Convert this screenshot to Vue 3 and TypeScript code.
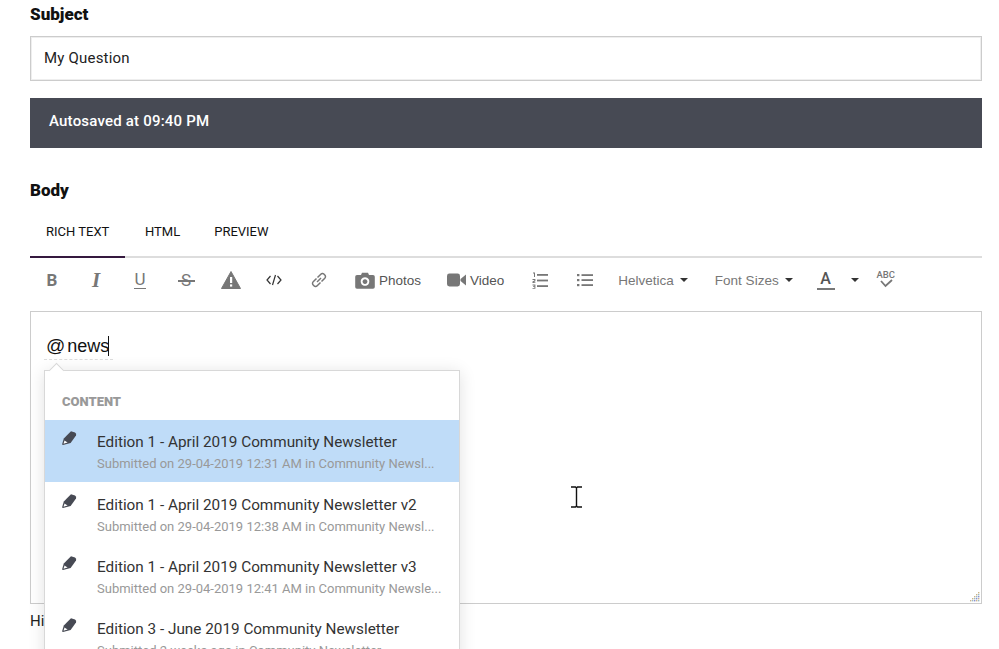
<template>
  <div class="page">
    <label class="field-label subject-label">Subject</label>
    <div class="text-input">My Question</div>
    <div class="autosave">Autosaved at 09:40 PM</div>

    <label class="field-label body-label">Body</label>
    <div class="tabs">
      <div v-for="(tab, i) in tabs" :key="tab" class="tab" :class="{ active: i === 0 }">{{ tab }}</div>
    </div>

    <div class="toolbar">
      <span class="tool t-b">B</span>
      <span class="tool t-i">I</span>
      <span class="tool t-u">U</span>
      <span class="tool t-s">S</span>
      <svg class="ico warn" width="20" height="18" viewBox="0 0 20 18">
        <path d="M10 0.5 L19.5 17.5 H0.5 Z" fill="#777" stroke="#777" stroke-linejoin="round" />
        <rect x="9" y="6" width="2.2" height="6" fill="#fff" />
        <rect x="9" y="13.4" width="2.2" height="2.2" fill="#fff" />
      </svg>
      <svg class="ico code" width="16" height="12" viewBox="0 0 16 12" fill="none" stroke="#333" stroke-width="1.2">
        <path d="M4.5 2 L1 6 L4.5 10 M11.5 2 L15 6 L11.5 10 M9.5 1 L6.5 11" />
      </svg>
      <svg class="ico link" width="16" height="16" viewBox="0 0 16 16" fill="none" stroke="#777" stroke-width="1.5">
        <path d="M6.5 5.5 L9.8 2.2 a2.3 2.3 0 0 1 3.6 0.4 a2.3 2.3 0 0 1 0.4 3.6 L10.5 9.5" />
        <path d="M9.5 10.5 L6.2 13.8 a2.3 2.3 0 0 1 -3.6 -0.4 a2.3 2.3 0 0 1 -0.4 -3.6 L5.5 6.5" />
        <path d="M6 10 L10 6" />
      </svg>
      <span class="tool-text photos">
        <svg width="20" height="17" viewBox="0 0 20 17">
          <path fill="#777" fill-rule="evenodd" d="M2 3 H6 L7 .8 H13 L14 3 H18 a1.8 1.8 0 0 1 1.8 1.8 V15 a1.8 1.8 0 0 1 -1.8 1.8 H2 A1.8 1.8 0 0 1 .2 15 V4.8 A1.8 1.8 0 0 1 2 3 Z M10 5.2 a4.3 4.3 0 1 0 .01 0 Z M10 7.2 a2.4 2.4 0 1 1 -.01 0 Z" />
        </svg>
        Photos
      </span>
      <span class="tool-text video">
        <svg width="19" height="14" viewBox="0 0 19 14">
          <rect x="0" y="0.5" width="13" height="13" rx="2.4" fill="#777" />
          <path d="M13.5 6 L19 1.5 V12.5 L13.5 8 Z" fill="#777" />
        </svg>
        Video
      </span>
      <svg class="ico ol" width="16" height="17" viewBox="0 0 16 17" fill="#777">
        <rect x="5" y="2" width="11" height="1.8" />
        <rect x="5" y="7.6" width="11" height="1.8" />
        <rect x="5" y="13.2" width="11" height="1.8" />
        <path d="M1 .5 H3 V5 H2 V1.5 H1 Z M.5 7 H3.4 V9.2 L1.6 10.2 H3.4 V11 H.5 V9.6 L2.4 8.6 V7.9 H.5 Z M.5 12.6 H3.4 V16.8 H.5 V16 H2.4 V15 H1 V14.3 H2.4 V13.4 H.5 Z" />
      </svg>
      <svg class="ico ul" width="16" height="14" viewBox="0 0 16 14" fill="#777">
        <rect x="0" y="1" width="2.4" height="2.2" />
        <rect x="0" y="6" width="2.4" height="2.2" />
        <rect x="0" y="11" width="2.4" height="2.2" />
        <rect x="4.5" y="1.2" width="11.5" height="1.8" />
        <rect x="4.5" y="6.2" width="11.5" height="1.8" />
        <rect x="4.5" y="11.2" width="11.5" height="1.8" />
      </svg>
      <span class="tool-text font-name">Helvetica<i class="caret"></i></span>
      <span class="tool-text font-size">Font Sizes<i class="caret"></i></span>
      <span class="color-a">A</span>
      <i class="caret color-caret"></i>
      <span class="spell">
        <span class="abc">ABC</span>
        <svg width="14" height="9" viewBox="0 0 14 9" fill="none" stroke="#777" stroke-width="1.8">
          <path d="M2 2 L6.5 7 L13 1" />
        </svg>
      </span>
    </div>

    <div class="editor">
      <div class="mention-line">
        <span class="at">@</span><span class="typed">news</span><i class="text-cursor"></i>
      </div>
      <svg class="resize" width="10" height="10" viewBox="0 0 10 10">
        <g v-for="d in grip" :key="d.x + '-' + d.y">
          <rect :x="d.x" :y="d.y" width="1.4" height="1.4" :fill="d.c" />
        </g>
      </svg>
      <svg class="ibeam" width="13" height="22" viewBox="0 0 13 22" fill="none" stroke="#111" stroke-width="1.4">
        <path d="M1 1 H5.5 L6.5 2 L7.5 1 H12 M6.5 2 V20 M1 21 H5.5 L6.5 20 L7.5 21 H12" />
      </svg>
    </div>

    <div class="hint">Hi</div>

    <div class="dropdown">
      <div class="arrow"></div>
      <div class="drop-title">CONTENT</div>
      <div v-for="(item, i) in items" :key="item.title" class="drop-item" :class="{ selected: i === 0 }">
        <svg class="pencil" width="15" height="15" viewBox="0 0 15 15">
          <path fill="#474a54" d="M9 .2 L13 1.6 Q14.8 2.8 14 4.6 L8.6 12 L1 13.9 Q.1 14 .2 13 L1.8 7.6 Z" />
          <path fill="#fff" d="M2.5 9.6 L5.6 11.6 L1.5 12.8 Z" />
        </svg>
        <div class="item-title">{{ item.title }}</div>
        <div class="item-sub">{{ item.sub }}</div>
      </div>
    </div>
  </div>
</template>

<script setup lang="ts">
const tabs = ['RICH TEXT', 'HTML', 'PREVIEW']

const items = [
  { title: 'Edition 1 - April 2019 Community Newsletter', sub: 'Submitted on 29-04-2019 12:31 AM in Community Newsl...' },
  { title: 'Edition 1 - April 2019 Community Newsletter v2', sub: 'Submitted on 29-04-2019 12:38 AM in Community Newsl...' },
  { title: 'Edition 1 - April 2019 Community Newsletter v3', sub: 'Submitted on 29-04-2019 12:41 AM in Community Newsle...' },
  { title: 'Edition 3 - June 2019 Community Newsletter', sub: 'Submitted 2 weeks ago in Community Newsletter' }
]

// little dotted triangle in the corner of the textarea
const gripColors = ['#8a8fd0', '#c9b48a', '#9ab8c9']
const grip: { x: number; y: number; c: string }[] = []
for (let row = 0; row < 5; row++) {
  for (let col = 4 - row; col < 5; col++) {
    grip.push({ x: col * 2, y: row * 2, c: gripColors[(row + col) % 3] })
  }
}
</script>

<style scoped>
.page {
  position: relative;
  width: 999px;
  height: 649px;
  overflow: hidden;
  padding: 0 17px 0 30px;
  box-sizing: border-box;
  background: #fff;
  font-family: Roboto, "Noto Sans", sans-serif;
  color: #111;
}

.field-label {
  display: block;
  font-size: 17px;
  line-height: 20px;
  font-weight: 900;
}

.subject-label {
  padding-top: 4px;
}

.text-input {
  margin-top: 12px;
  height: 45px;
  box-sizing: border-box;
  border: 1px solid #ccc;
  box-shadow: inset 0 0 0 1px #eee;
  padding: 0 13px 2px;
  display: flex;
  align-items: center;
  font-size: 15px;
  letter-spacing: 0.2px;
  color: #222;
}

.autosave {
  margin-top: 17px;
  height: 50px;
  box-sizing: border-box;
  background: #474a54;
  color: #fff;
  padding: 0 19px 5px;
  display: flex;
  align-items: center;
  font-size: 15px;
  font-weight: 500;
  letter-spacing: 0.2px;
}

.body-label {
  margin-top: 32px;
}

.tabs {
  margin-top: 7px;
  height: 49px;
  display: flex;
  border-bottom: 2px solid #ddd;
  box-sizing: content-box;
}

.tab {
  padding: 0 17px;
  display: flex;
  align-items: center;
  font-size: 13px;
  color: #111;
  height: 49px;
}

.tab.active {
  width: 63px;
  padding: 0 16px;
  margin-right: 3px;
  white-space: nowrap;
  border-bottom: 2px solid #35193f;
  height: 49px;
}

.toolbar {
  height: 52px;
  box-sizing: border-box;
  padding-bottom: 8px;
  display: flex;
  align-items: center;
  position: relative;
  color: #777;
  font-size: 13.5px;
  font-family: "Liberation Sans", Arial, sans-serif;
}

.tool {
  position: relative;
  width: 16px;
  text-align: center;
  font-size: 17px;
  color: #777;
  flex: none;
}

.t-b { margin-left: 14px; font-weight: 700; font-family: Roboto, sans-serif; }
.t-i { margin-left: 28px; font-style: italic; font-family: "Liberation Serif", serif; font-size: 21px; font-weight: 700; line-height: 20px; }
.t-u { margin-left: 30px; font-family: Roboto, sans-serif; font-size: 17px; line-height: 15px; width: 12px; padding-bottom: 1px; border-bottom: 1.5px solid #777; margin-right: 4px; margin-top: 1px; }
.t-s { margin-left: 28px; font-family: Roboto, sans-serif; }

/* strike line is wider than the letter */
.t-s::after {
  content: '';
  position: absolute;
  left: 0;
  right: -1px;
  top: 50%;
  height: 1.5px;
  background: #777;
}

.ico { flex: none; }
.warn { margin-left: 27px; }
.code { margin-left: 25px; }
.link { margin-left: 29px; }

.tool-text {
  display: inline-flex;
  align-items: center;
  white-space: nowrap;
  flex: none;
  color: #555;
}

.tool-text svg { margin-right: 4px; }

.photos { margin-left: 28px; }
.video { margin-left: 26px; }
.ol { margin-left: 28px; }
.ul { margin-left: 29px; }
.font-name { margin-left: 25px; color: #777; }
.font-size { margin-left: 27px; color: #777; }

.caret {
  display: inline-block;
  width: 0;
  height: 0;
  margin-left: 6px;
  border-left: 4.5px solid transparent;
  border-right: 4.5px solid transparent;
  border-top: 4.5px solid #333;
}

.color-a {
  margin-left: 24px;
  width: 18px;
  text-align: center;
  font-family: Roboto, sans-serif;
  font-weight: 500;
  font-size: 16px;
  line-height: 18px;
  color: #555;
  border-bottom: 2px solid #777;
  flex: none;
}

.color-caret {
  margin-left: 16px;
  flex: none;
}

.spell {
  margin-left: 19px;
  width: 16px;
  display: flex;
  flex-direction: column;
  align-items: center;
  margin-top: -3px;
}

.abc {
  font-size: 9.5px;
  line-height: 9px;
  font-weight: 500;
  color: #777;
  font-family: Roboto, sans-serif;
}

.editor {
  position: relative;
  height: 293px;
  box-sizing: border-box;
  border: 1px solid #ccc;
  margin-top: 1px;
  padding: 21px 13px;
}

.mention-line {
  display: inline-flex;
  align-items: center;
  height: 26px;
  font-family: "Liberation Sans", Arial, sans-serif;
  font-size: 18px;
  color: #111;
  border-bottom: 1px dashed #ddd;
  padding: 0 4px 0 2px;
}

.at {
  margin-right: 2px;
  font-size: 19px;
}

.text-cursor {
  display: inline-block;
  width: 1px;
  height: 20px;
  background: #111;
  margin-left: -1px;
}

.resize {
  position: absolute;
  right: 1px;
  bottom: 1px;
}

.ibeam {
  position: absolute;
  left: 539px;
  top: 174px;
}

.hint {
  margin-top: 8px;
  font-size: 15px;
  color: #222;
}

.dropdown {
  position: absolute;
  left: 44px;
  top: 370px;
  width: 416px;
  height: 300px;
  box-sizing: border-box;
  background: #fff;
  border: 1px solid #d8d8d8;
  box-shadow: 0 2px 16px rgba(0, 0, 0, 0.12);
}

.arrow {
  position: absolute;
  left: 6px;
  top: -6px;
  width: 10px;
  height: 10px;
  background: #fff;
  border-left: 1px solid #d8d8d8;
  border-top: 1px solid #d8d8d8;
  transform: rotate(45deg);
}

.drop-title {
  height: 49px;
  box-sizing: border-box;
  padding: 23px 0 0 17px;
  font-size: 13px;
  line-height: 16px;
  font-weight: 900;
  color: #999;
}

.drop-item {
  position: relative;
  height: 62px;
  box-sizing: border-box;
  padding: 12px 10px 0 52px;
  white-space: nowrap;
  overflow: hidden;
}

.drop-item.selected {
  background: #bfdcf8;
  margin-bottom: 1px;
}

.pencil {
  position: absolute;
  left: 17px;
  top: 11px;
}

.item-title {
  font-size: 15.3px;
  line-height: 20px;
  color: #333;
}

.item-sub {
  margin-top: 4px;
  font-size: 13px;
  line-height: 16px;
  color: #999;
}
</style>
